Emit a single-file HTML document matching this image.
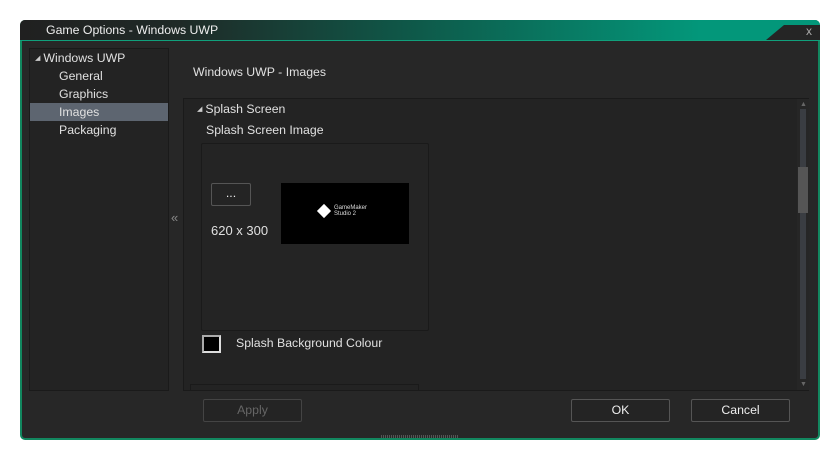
<!DOCTYPE html>
<html><head><meta charset="utf-8"><style>
*{margin:0;padding:0;box-sizing:border-box}
body{width:840px;height:460px;background:#fff;position:relative;overflow:hidden;font-family:"Liberation Sans",sans-serif;font-size:12.3px;color:#ddd}
.abs{position:absolute}
.win{left:20px;top:20px;width:800px;height:420px;background:#272727;border:2px solid #12875f;border-top:none;border-radius:5px}
.title{left:20px;top:20px;width:800px;height:21px;background:linear-gradient(90deg,#202020 0%,#1f2a27 20%,#0e5a4a 50%,#03977a 85%,#03977a 100%);border-radius:5px 5px 0 0;border-bottom:1px solid #10a07c}
.title span{position:absolute;left:26px;top:3px;color:#eee}
.close{position:absolute;right:0;top:5px;width:54px;height:15px;background:#252525;clip-path:polygon(18px 0,100% 0,100% 100%,0 100%)}
.close b{position:absolute;right:8px;top:-1px;font-weight:normal;color:#aaa;font-size:12px}
.left{left:29px;top:48px;width:140px;height:343px;background:#232323;border:1px solid #1a1a1a}
.left div{position:absolute;left:0;width:138px;height:18px;line-height:18px;color:#e0e0e0}
.content{left:183px;top:98px;width:626px;height:293px;background:#232323;border:1px solid #1a1a1a}
.btn{position:absolute;height:23px;border:1px solid #555;border-radius:2px;background:#242424;text-align:center;line-height:21px;color:#eee}
.tri{font-size:7px;color:#ccc;position:relative;top:-2px;margin-right:3px}
</style></head><body>
<div class="abs win"></div>
<div class="abs title"><span>Game Options - Windows UWP</span><div class="close"><b>x</b></div></div>
<div class="abs left">
<div style="top:0;padding-left:5px"><span class="tri">◢</span>Windows UWP</div>
<div style="top:18px;padding-left:29px">General</div>
<div style="top:36px;padding-left:29px">Graphics</div>
<div style="top:54px;padding-left:29px;background:#5d6570">Images</div>
<div style="top:72px;padding-left:29px">Packaging</div>
</div>
<div class="abs" style="left:171px;top:210px;color:#888;font-size:13px">«</div>
<div class="abs" style="left:193px;top:65px;color:#e0e0e0">Windows UWP - Images</div>
<div class="abs content"></div>
<div class="abs" style="left:197px;top:102px;color:#e0e0e0"><span class="tri">◢</span>Splash Screen</div>
<div class="abs" style="left:206px;top:123px;color:#e0e0e0">Splash Screen Image</div>
<div class="abs" style="left:201px;top:143px;width:228px;height:188px;border:1px solid #1a1a1a;border-radius:2px;background:#242424"></div>
<div class="btn" style="left:211px;top:183px;width:40px;line-height:19px">...</div>
<div class="abs" style="left:211px;top:223px;color:#e0e0e0;font-size:13px">620 x 300</div>
<div class="abs" style="left:281px;top:183px;width:128px;height:61px;background:#000">
<div class="abs" style="left:38px;top:23px;width:10px;height:10px;background:#fff;transform:rotate(45deg)"></div>
<div class="abs" style="left:53px;top:22px;font-size:6px;line-height:6px;color:#ddd">GameMaker<br>Studio 2</div></div>
<div class="abs" style="left:202px;top:335px;width:19px;height:18px;background:#000;border:2px solid #ddd;border-left-color:#aaa;border-top-color:#aaa"></div>
<div class="abs" style="left:236px;top:336px;color:#e0e0e0">Splash Background Colour</div>
<div class="abs" style="left:190px;top:384px;width:229px;height:7px;border:1px solid #1a1a1a;border-bottom:none"></div>
<div class="abs" style="left:797px;top:99px;width:12px;height:291px;background:#262626"></div>
<div class="abs" style="left:800px;top:109px;width:6px;height:270px;background:#3a3d42"></div>
<div class="abs" style="left:798px;top:167px;width:10px;height:46px;background:#555"></div>
<div class="abs" style="left:800px;top:101px;color:#666;font-size:7px">▲</div>
<div class="abs" style="left:800px;top:381px;color:#666;font-size:7px">▼</div>
<div class="btn" style="left:203px;top:399px;width:99px;color:#666;border-color:#444">Apply</div>
<div class="btn" style="left:571px;top:399px;width:99px">OK</div>
<div class="btn" style="left:691px;top:399px;width:99px">Cancel</div>
<div class="abs" style="left:381px;top:435px;width:78px;height:3px;background:repeating-linear-gradient(90deg,#555 0 1px,transparent 1px 2px)"></div>
</body></html>
